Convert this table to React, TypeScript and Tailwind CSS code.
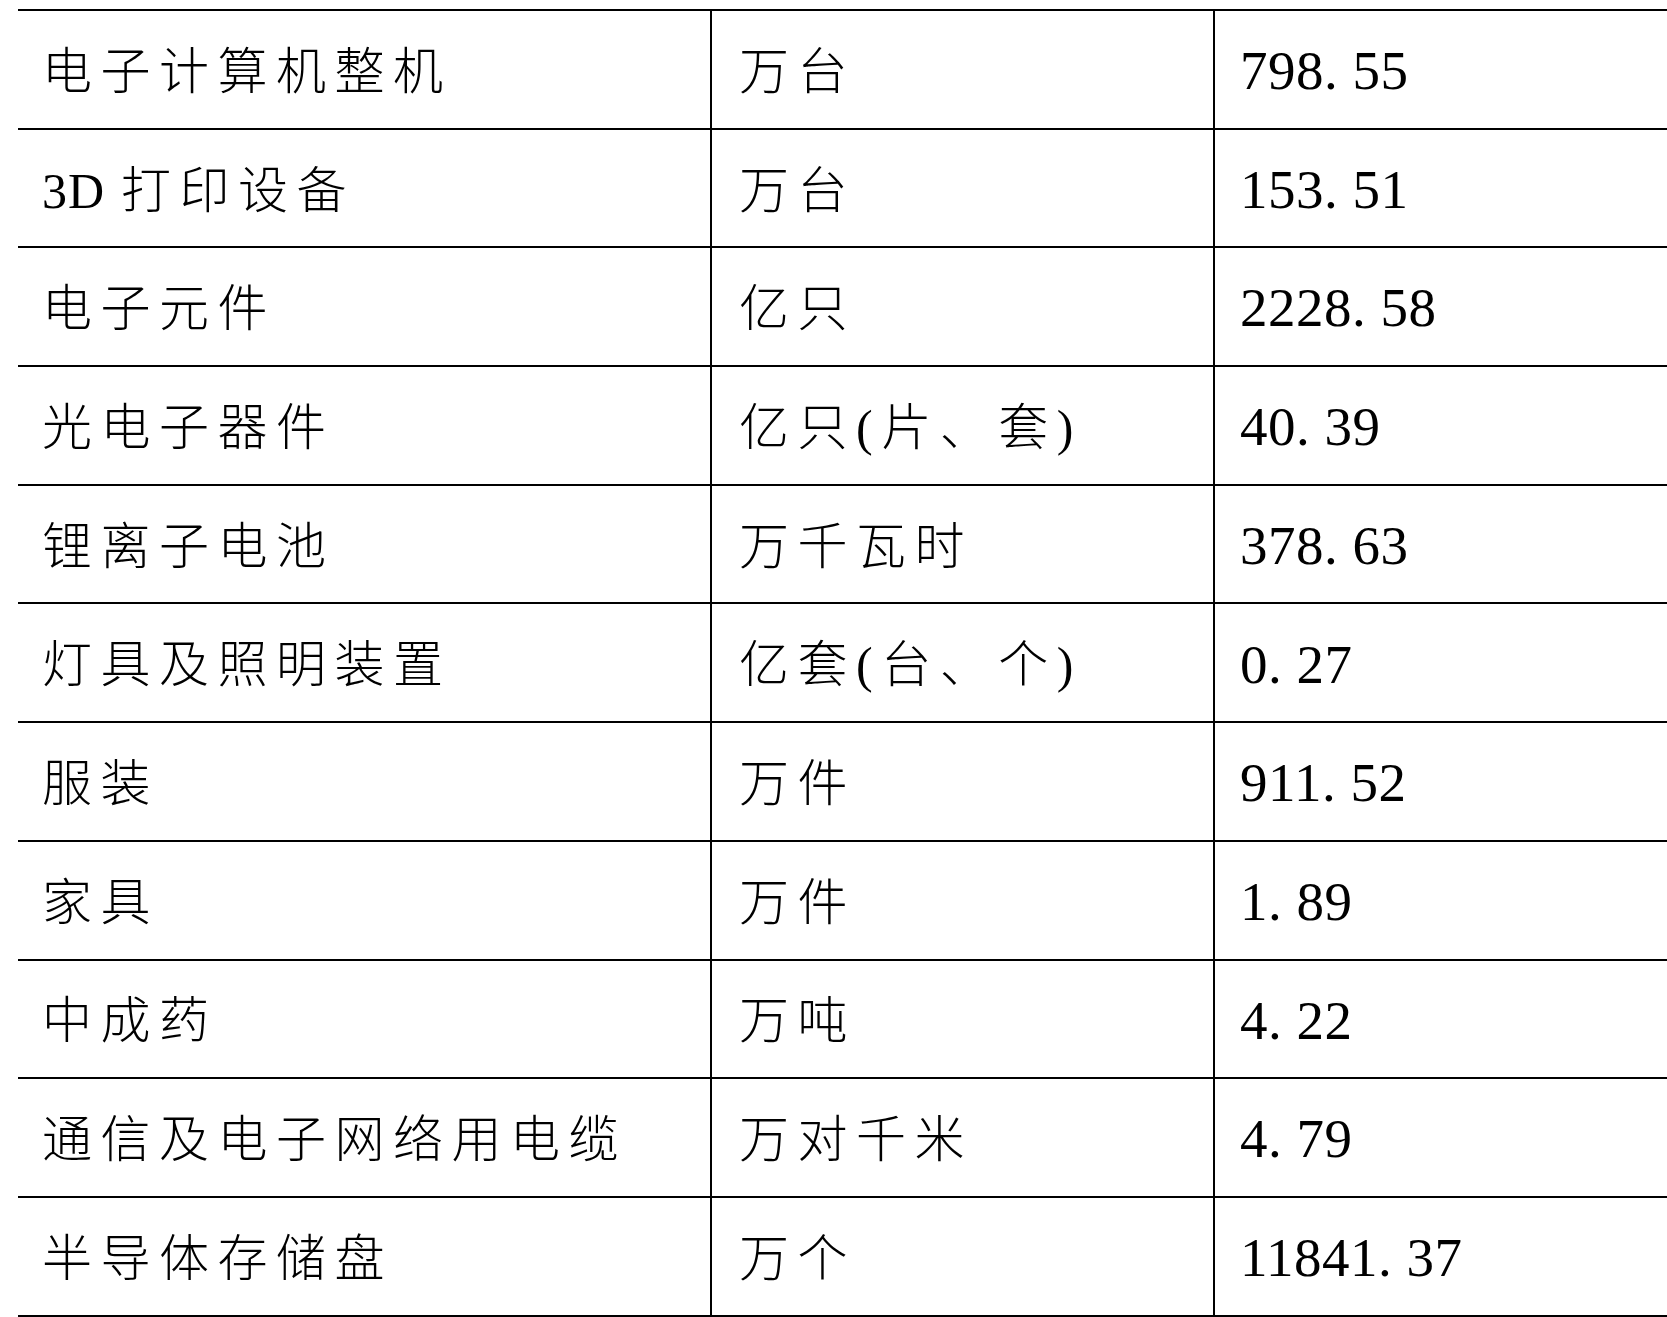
const ROWS: [string, string, string][] = [
  ['电子计算机整机', '万台', '798. 55'],
  ['3D 打印设备', '万台', '153. 51'],
  ['电子元件', '亿只', '2228. 58'],
  ['光电子器件', '亿只(片、套)', '40. 39'],
  ['锂离子电池', '万千瓦时', '378. 63'],
  ['灯具及照明装置', '亿套(台、个)', '0. 27'],
  ['服装', '万件', '911. 52'],
  ['家具', '万件', '1. 89'],
  ['中成药', '万吨', '4. 22'],
  ['通信及电子网络用电缆', '万对千米', '4. 79'],
  ['半导体存储盘', '万个', '11841. 37'],
];

const cjk = "font-['Liberation_Serif','Noto_Sans_CJK_SC',serif] font-light text-[50px] tracking-[8.5px] text-black";
const num = "font-['Liberation_Serif',serif] text-[55px] tracking-[0.5px] text-black";

function Label({ text }: { text: string }) {
  // keep latin runs tight like the source document
  if (text.startsWith('3D ')) {
    return (
      <span>
        <span className="tracking-[1px]">3D</span>
        <span className="ml-[16px]">{text.slice(3)}</span>
      </span>
    );
  }
  return <span>{text}</span>;
}

export default function App() {
  return (
    <div className="h-[1317px] w-[1667px] overflow-hidden bg-white pl-[18px] pt-[9px]">
      <div className="border-t-2 border-black">
        {ROWS.map(([name, unit, value]) => (
          <div key={name} className="flex h-[118.7px] border-b-2 border-black">
            <div className={`flex w-[694px] items-center border-r-2 border-black pl-[24px] pt-[6px] ${cjk}`}>
              <Label text={name} />
            </div>
            <div className={`flex w-[503px] items-center border-r-2 border-black pl-[27px] pt-[6px] ${cjk}`}>
              {unit}
            </div>
            <div className={`flex flex-1 items-center pl-[25px] pt-[4px] ${num}`}>{value}</div>
          </div>
        ))}
      </div>
    </div>
  );
}
